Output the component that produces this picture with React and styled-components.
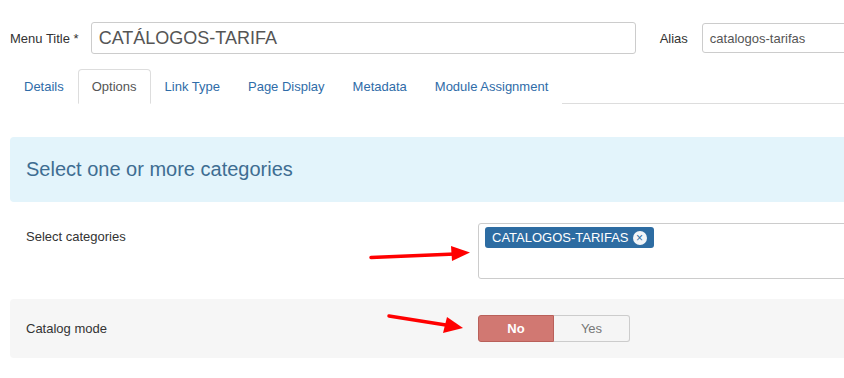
import React from 'react'
import styled, { createGlobalStyle } from 'styled-components'

const GlobalStyle = createGlobalStyle`
    html, body {
        margin: 0;
        padding: 0;
        background: #fff;
        overflow: hidden;
    }
    body {
        font-family: "Liberation Sans", Arial, sans-serif;
        font-size: 13px;
        color: #333;
    }
`

const Page = styled.div`
    position: relative;
    width: 844px;
    height: 378px;
    overflow: hidden;
`

const Inner = styled.div`
    width: 900px;
    padding: 22px 0 0 10px;
`

const TitleRow = styled.div`
    display: flex;
    align-items: center;
`

const Label = styled.label`
    font-size: 13px;
    color: #333;
    margin-right: ${props => props.gap || '12px'};
    margin-left: ${props => props.offset || '0'};
`

const Input = styled.div`
    box-sizing: border-box;
    width: ${props => props.width};
    height: ${props => props.height};
    border: 1px solid #ccc;
    border-radius: 3px;
    padding: 0 7px;
    display: flex;
    align-items: center;
    font-size: ${props => props.big ? '18px' : '13px'};
    color: #555;
    background: #fff;
`

const Tabs = styled.div`
    display: flex;
    margin-top: 15px;
    height: 35px;
    border-bottom: 1px solid #ddd;
    box-sizing: border-box;
`

const Tab = styled.div`
    box-sizing: border-box;
    height: 35px;
    padding: 0 ${props => props.pad || '13px'};
    display: flex;
    align-items: center;
    font-size: 13px;
    color: ${props => props.active ? '#555' : '#2f6ca8'};
    background: #fff;
    border: 1px solid ${props => props.active ? '#ddd' : 'transparent'};
    border-bottom-color: ${props => props.active ? '#fff' : 'transparent'};
    border-radius: 4px 4px 0 0;
    margin-bottom: -1px;
`

const InfoBox = styled.div`
    margin-top: 33px;
    height: 65px;
    background: #e3f4fb;
    border-radius: 4px;
    padding-left: 16px;
    display: flex;
    align-items: center;
    font-size: 20px;
    color: #3e6d92;
`

const FieldRow = styled.div`
    display: flex;
    align-items: ${props => props.center ? 'center' : 'flex-start'};
    padding: 0 16px;
    margin-top: ${props => props.top};
    height: ${props => props.height || 'auto'};
    background: ${props => props.shaded ? '#f6f6f6' : 'transparent'};
    border-radius: 4px;
`

const FieldLabel = styled.div`
    width: 452px;
    flex-shrink: 0;
    font-size: 13px;
    color: #333;
    padding-top: ${props => props.top || '0'};
`

const MultiSelect = styled.div`
    box-sizing: border-box;
    width: 420px;
    height: 56px;
    border: 1px solid #ccc;
    border-radius: 3px;
    padding: 3px 6px;
`

const Tag = styled.span`
    display: inline-flex;
    align-items: center;
    gap: 4px;
    height: 21px;
    padding: 0 7px;
    background: #2d6ca2;
    border-radius: 3px;
    color: #fff;
    font-size: 13px;
`

const TagClose = styled.span`
    width: 14px;
    height: 14px;
    border-radius: 50%;
    background: #f2f5f8;
    color: #2d6ca2;
    display: inline-flex;
    align-items: center;
    justify-content: center;
    font-size: 12px;
    line-height: 1;
`

const Toggle = styled.div`
    display: flex;
`

const ToggleButton = styled.div`
    box-sizing: border-box;
    width: 76px;
    height: 27px;
    display: flex;
    align-items: center;
    justify-content: center;
    font-size: 13px;
    font-weight: ${props => props.on ? 'bold' : 'normal'};
    color: ${props => props.on ? '#fff' : '#777'};
    background: ${props => props.on ? '#d17872' : '#f5f5f5'};
    border: 1px solid ${props => props.on ? '#b9605a' : '#ccc'};
    border-radius: ${props => props.first ? '3px 0 0 3px' : '0 3px 3px 0'};
    border-left-width: ${props => props.first ? '1px' : '0'};
`

const Arrows = styled.svg`
    position: absolute;
    left: 0;
    top: 0;
    pointer-events: none;
`

const tabs = [
    { name: 'Details', pad: '13px' },
    { name: 'Options', active: true },
    { name: 'Link Type' },
    { name: 'Page Display' },
    { name: 'Metadata' },
    { name: 'Module Assignment' },
]

const App = () => {
    return (
        <Page>
            <GlobalStyle />
            <Inner>
                <TitleRow>
                    <Label>Menu Title *</Label>
                    <Input width="545px" height="32px" big>CATÁLOGOS-TARIFA</Input>
                    <Label gap="14px" offset="24px">Alias</Label>
                    <Input width="200px" height="30px">catalogos-tarifas</Input>
                </TitleRow>
                <Tabs>
                    {tabs.map(t => (
                        <Tab key={t.name} active={t.active} pad={t.pad}>{t.name}</Tab>
                    ))}
                </Tabs>
                <InfoBox>Select one or more categories</InfoBox>
                <FieldRow top="21px">
                    <FieldLabel top="6px">Select categories</FieldLabel>
                    <MultiSelect>
                        <Tag>CATALOGOS-TARIFAS <TagClose>×</TagClose></Tag>
                    </MultiSelect>
                </FieldRow>
                <FieldRow top="20px" height="59px" center shaded>
                    <FieldLabel>Catalog mode</FieldLabel>
                    <Toggle>
                        <ToggleButton on first>No</ToggleButton>
                        <ToggleButton>Yes</ToggleButton>
                    </Toggle>
                </FieldRow>
            </Inner>
            <Arrows width="844" height="378" viewBox="0 0 844 378">
                <line x1="371" y1="257.5" x2="455" y2="254" stroke="#f00" strokeWidth="3.5" strokeLinecap="round" />
                <polygon points="451,246 470,252.5 452,261" fill="#f00" />
                <line x1="389" y1="316" x2="449" y2="325.5" stroke="#f00" strokeWidth="3.5" strokeLinecap="round" />
                <polygon points="447,317 463,328 443,333" fill="#f00" />
            </Arrows>
        </Page>
    )
}

export default App
